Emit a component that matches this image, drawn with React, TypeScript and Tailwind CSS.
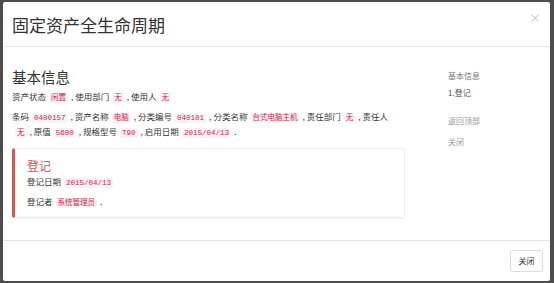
import React from 'react';

const Code: React.FC<{ children: React.ReactNode }> = ({ children }) => (
  <code className="mx-[3px] rounded-[2px] bg-[#f9f2f4] px-[2px] py-[1px] font-['Liberation_Mono','Noto_Sans_CJK_SC',monospace] text-[7.5px] text-[#c7254e]">
    {children}
  </code>
);

export default function App() {
  return (
    <div className="h-[283px] w-[554px] bg-[#4d4d4d] pl-[3px] pr-[4px] pt-[2px] pb-[2px] font-['Noto_Sans_CJK_SC',sans-serif] text-[#333]">
      <div className="flex h-[279px] flex-col rounded-[2px] bg-white">
        {/* Header */}
        <div className="relative flex h-[45px] items-center border-b border-[#e5e5e5] pl-[9px]">
          <h1 className="text-[17px] leading-none text-[#333]">固定资产全生命周期</h1>
          <span className="absolute right-[9px] top-[10px] text-[12px] leading-none text-[#c8c8c8]">×</span>
        </div>

        {/* Body */}
        <div className="flex h-[194px] border-b border-[#e5e5e5]">
          <div className="w-[402px] pl-[9px] pt-[20px]">
            <h2 className="text-[14.5px] leading-[20px]">基本信息</h2>
            <p className="mt-[3px] whitespace-nowrap text-[8.5px] leading-[13px]">
              资产状态<Code>闲置</Code>, 使用部门<Code>无</Code>, 使用人<Code>无</Code>
            </p>
            <p className="mt-[5px] whitespace-nowrap text-[8.5px] leading-[13px]">
              条码<Code>0400157</Code>, 资产名称<Code>电脑</Code>, 分类编号<Code>040101</Code>, 分类名称<Code>台式电脑主机</Code>, 责任部门<Code>无</Code>, 责任人
              <br />
              <Code>无</Code>, 原值<Code>5600</Code>, 规格型号<Code>T90</Code>, 启用日期<Code>2015/04/13</Code>.
            </p>

            <div className="mt-[8px] w-[393px] rounded-[2px] border border-l-[3px] border-[#eee] border-l-[#d9534f] pb-[7px] pl-[12px] pt-[8px] shadow-[0_1px_2px_rgba(0,0,0,0.04)]">
              <h3 className="text-[12px] leading-[18px] text-[#d9534f]">登记</h3>
              <p className="text-[8.5px] leading-[13px]">
                登记日期<Code>2015/04/13</Code>
              </p>
              <p className="mt-[5px] text-[8.5px] leading-[13px]">
                登记者<Code>系统管理员</Code>.
              </p>
            </div>
          </div>

          <div className="flex flex-col pl-[43px] pt-[24px] text-[8px] leading-[10px] text-[#777]">
            <span>基本信息</span>
            <span className="mt-[7px] text-[#555]">1.登记</span>
            <span className="mt-[18px] text-[#999]">返回顶部</span>
            <span className="mt-[11px] text-[#999]">关闭</span>
          </div>
        </div>

        {/* Footer */}
        <div className="flex flex-1 items-start justify-end pr-[7px] pt-[9px]">
          <button className="h-[22px] w-[33px] rounded-[3px] border border-[#ddd] bg-white text-[8px] text-[#333]">
            关闭
          </button>
        </div>
      </div>
    </div>
  );
}
